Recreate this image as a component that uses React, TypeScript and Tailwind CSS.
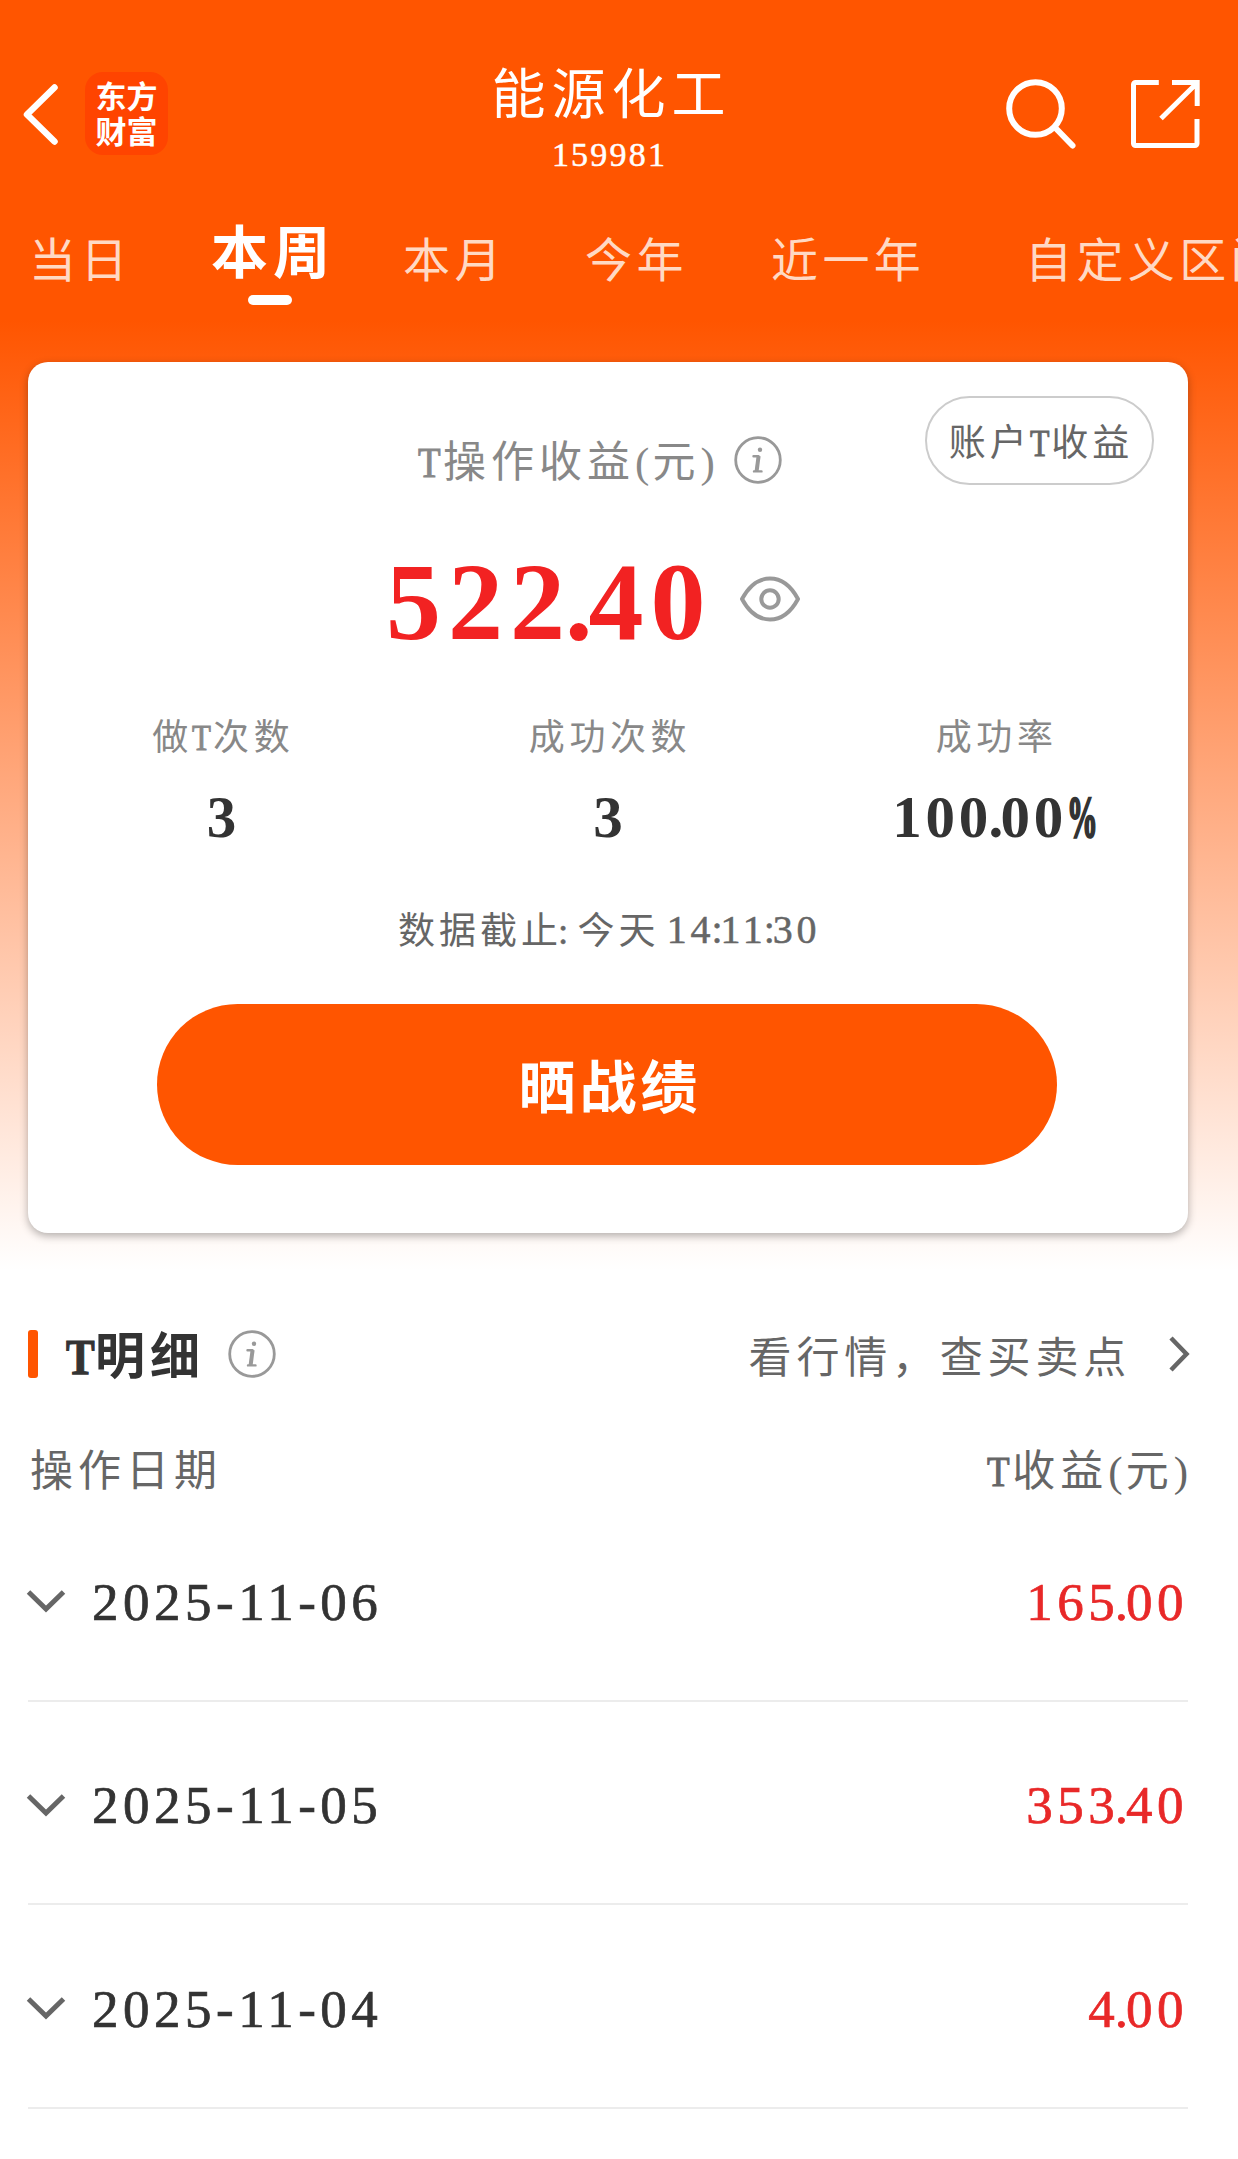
import React from "react";

/** Numeric text whose separators (. and :) take up less room than the digits. */
function Num({ value, tight }: { value: string; tight: string }) {
  return (
    <>
      {value.split(/([.:])/).map((part, i) =>
        part === "." || part === ":" ? (
          <span key={i} className={tight}>
            {part}
          </span>
        ) : (
          <React.Fragment key={i}>{part}</React.Fragment>
        )
      )}
    </>
  );
}

/** The narrow, sturdy capital T that sits between the Chinese characters. */
function T() {
  return (
    <span className="-ml-[0.03em] mr-[0.03em] inline-block w-[0.56em] origin-left scale-x-[0.86] tracking-normal [-webkit-text-stroke:0.025em]">
      T
    </span>
  );
}

function InfoIcon() {
  return (
    <svg className="block size-[48px]" viewBox="0 0 48 48" fill="none" stroke="#999" strokeLinecap="round">
      <circle cx="24" cy="24" r="22.3" strokeWidth="2.8" />
      <circle cx="26" cy="13.8" r="2.2" fill="#999" stroke="none" />
      <path d="M19.500 20.200h5M20 35.400h7.500" strokeWidth="2.400" />
      <path d="M24.600 20 22.600 35.200" strokeWidth="4" strokeLinecap="butt" />
    </svg>
  );
}

const tabs = [
  { label: "当日", width: "w-[182px]" },
  { label: "本周", width: "w-[192px]" },
  { label: "本月", width: "w-[182px]" },
  { label: "今年", width: "w-[186px]" },
  { label: "近一年", width: "w-[254px]" },
  { label: "自定义区间", width: "w-[270px]" },
];

const rows = [
  { date: "2025-11-06", profit: "165.00" },
  { date: "2025-11-05", profit: "353.40" },
  { date: "2025-11-04", profit: "4.00" },
];

function Header() {
  return (
    <header className="grid h-[209px] grid-cols-[360px_497px_1fr] text-white">
      <div className="flex items-start pl-[22px] pt-[72px]">
        <svg className="mt-[11px] h-[64px] w-[38px]" viewBox="0 0 38 64" fill="none" stroke="#fff" strokeWidth="6.500">
          <path d="M32.500 4.500 5 31.500l27.500 27" strokeLinecap="round" strokeLinejoin="round" />
        </svg>
        <div className="ml-[25px] flex size-[83px] flex-col items-center rounded-[18px] bg-[#ff4400] pt-[5px] font-['Noto_Sans_CJK_SC',sans-serif] text-[31px] font-bold leading-[35px]">
          <span>东方</span>
          <span>财富</span>
        </div>
      </div>
      <div className="flex flex-col items-center">
        <h1 className="mt-[69px] whitespace-nowrap pl-[6px] text-[54px] leading-none tracking-[6px]">能源化工</h1>
        <div className="mt-[15px] pl-[2px] text-[34px] leading-none tracking-[2.2px] [-webkit-text-stroke:0.5px]">159981</div>
      </div>
      <div className="flex items-start pl-[147px] pt-[78px]">
        <svg className="h-[74px] w-[74px]" viewBox="0 0 74 74" fill="none" stroke="#fff" strokeWidth="6">
          <circle cx="31.500" cy="30.500" r="26.300" />
          <path d="M51 49.500 68.500 67.500" strokeLinecap="round" />
        </svg>
        <svg className="ml-[51px] h-[74px] w-[74px]" viewBox="0 0 74 74" fill="none" stroke="#fff" strokeWidth="5">
          <path d="M29.800 4.500H6.500a2 2 0 0 0-2 2V65.500a2 2 0 0 0 2 2H66a2 2 0 0 0 2-2V41" />
          <path d="M43 4.500H68.200V28M67 6 32 40.500" />
        </svg>
      </div>
    </header>
  );
}

function Tabs() {
  return (
    <nav className="flex h-[153px] items-start overflow-hidden whitespace-nowrap pl-[29px]">
      {tabs.map((tab) => (
        <div key={tab.label} className={`shrink-0 ${tab.width}`}>
          {tab.label === "本周" ? (
            <div className="flex w-[117px] flex-col items-center pt-[16px] text-white">
              <span className="pl-[7px] text-[57px] font-bold leading-none tracking-[5px]">{tab.label}</span>
              <span className="mt-[13px] h-[10px] w-[44px] rounded-full bg-white" />
            </div>
          ) : (
            <div className="pt-[29px] text-[47px] leading-none tracking-[4.4px] text-[#ffd9c4]">{tab.label}</div>
          )}
        </div>
      ))}
    </nav>
  );
}

function Stat({ label, children }: { label: React.ReactNode; children: React.ReactNode }) {
  return (
    <div className="flex flex-col items-center whitespace-nowrap">
      <div className="pl-[4px] text-[36px] leading-none tracking-[4.600px] text-[#888]">{label}</div>
      <div className="mt-[32px] flex pl-[4px] text-[59px] font-bold leading-none tracking-[3.800px] text-[#333]">{children}</div>
    </div>
  );
}

function SummaryCard() {
  return (
    <section className="relative ml-[28px] h-[871px] w-[1160px] rounded-[20px] bg-white shadow-[0_3px_9px_rgba(0,0,0,0.3)]">
      <button className="absolute right-[34px] top-[34px] flex h-[89px] w-[229px] items-center justify-center whitespace-nowrap rounded-full border-2 border-[#ccc] pl-[3px] pt-[5px] text-[37px] leading-none tracking-[4px] text-[#666]">
        账户
        <T />
        收益
      </button>
      <div className="flex h-[185px] items-start pl-[391px] pt-[74px]">
        <div className="mt-[5px] w-[302px] whitespace-nowrap text-[43px] leading-none tracking-[5px] text-[#888]">
          <T />
          操作收益<span className="tracking-[3px]">(</span>元<span className="tracking-[3px]">)</span>
        </div>
        <div className="ml-[13px]">
          <InfoIcon />
        </div>
      </div>
      <div className="flex h-[173px] items-start pl-[358px]">
        <div className="w-[322px] text-[110px] font-bold leading-none tracking-[7px] text-[#f22222]">
          <Num value="522.40" tight="ml-[-7px] tracking-[-4px]" />
        </div>
        <svg className="ml-[31px] mt-[28px] h-[48px] w-[62px]" viewBox="0 0 62 48" fill="none" stroke="#999" strokeWidth="4">
          <path d="M3 24C10 11 20 3.500 31 3.500S52 11 59 24C52 37 42 44.500 31 44.500S10 37 3 24Z" strokeLinejoin="round" />
          <circle cx="31" cy="24" r="8.700" />
        </svg>
      </div>
      <div className="grid h-[192px] grid-cols-3">
        <Stat label={<>做<T />次数</>}>3</Stat>
        <Stat label="成功次数">3</Stat>
        <Stat label="成功率">
          <span>
            <Num value="100.00" tight="ml-[-3.800px] tracking-[-2.700px]" />
          </span>
          <span className="block w-[34px] origin-left scale-x-[0.52] [-webkit-text-stroke:2.500px]">%</span>
        </Stat>
      </div>
      <div className="flex h-[92px] items-start whitespace-pre pl-[370px] pt-[1px] text-[37px] leading-none tracking-[4px] text-[#666]">
        数据截止<span className="ml-[-4px] tracking-[0px] [-webkit-text-stroke:0.5px]">: </span>今天<span className="tracking-[-2px]"> </span>
        <span className="-mt-[3px] text-[40px] tracking-[3.800px] [-webkit-text-stroke:0.5px]">
          <Num value="14:11:30" tight="ml-[-3px] tracking-[-2px]" />
        </span>
      </div>
      <button className="ml-[129px] flex h-[161px] w-[900px] items-center justify-center rounded-full bg-[#ff5500] pl-[6px] pt-[7px] text-[57px] font-bold leading-none tracking-[4px] text-white">
        晒战绩
      </button>
    </section>
  );
}

function Details() {
  return (
    <section className="ml-[28px] w-[1160px]">
      <div className="flex h-[48px] items-center whitespace-nowrap">
        <span className="h-[48px] w-[10px] rounded-[3px] bg-[#ff5500]" />
        <h2 className="ml-[29px] w-[137px] pt-[5px] text-[50px] font-bold leading-none tracking-[5px] text-[#333]">
          <T />
          明细
        </h2>
        <div className="ml-[24px]">
          <InfoIcon />
        </div>
        <div className="ml-auto flex items-center text-[#666]">
          <span className="pt-[8px] text-[43px] leading-none tracking-[4.800px]">看行情，查买卖点</span>
          <svg className="-mr-[2px] ml-[37px] h-[38px] w-[22px]" viewBox="0 0 22 38" fill="none" stroke="#666" strokeWidth="4.500">
            <path d="M3 3 18.500 19 3 35" />
          </svg>
        </div>
      </div>
      <div className="mt-[72px] flex h-[48px] items-start justify-between whitespace-nowrap text-[43px] leading-none tracking-[5px] text-[#666]">
        <span className="pl-[2px]">操作日期</span>
        <span>
          <T />
          收益<span className="tracking-[3px]">(</span>元<span className="tracking-[0px]">)</span>
        </span>
      </div>
      {rows.map((row) => (
        <div key={row.date} className="flex h-[203.500px] items-center border-b-2 border-[#ececec] pt-[7px] text-[53px] leading-none">
          <svg className="-ml-[2px] h-[26px] w-[40px]" viewBox="0 0 40 26" fill="none" stroke="#666" strokeWidth="5">
            <path d="M2.500 3 20 20 37.500 3" />
          </svg>
          <span className="ml-[26px] tracking-[4.500px] text-[#333] [-webkit-text-stroke:0.7px]">{row.date}</span>
          <span className="ml-auto tracking-[4.500px] text-[#e82828] [-webkit-text-stroke:0.7px]">
            <Num value={row.profit} tight="ml-[-4.500px] tracking-[-2px]" />
          </span>
        </div>
      ))}
    </section>
  );
}

export default function App() {
  return (
    <div className="h-[2159px] w-[1238px] overflow-hidden bg-white font-['Liberation_Serif','Noto_Sans_CJK_SC',serif]">
      <div className="h-[1330px] bg-[linear-gradient(to_bottom,#ff5500_320px,#ffffff_1270px)]">
        <Header />
        <Tabs />
        <SummaryCard />
      </div>
      <Details />
    </div>
  );
}
